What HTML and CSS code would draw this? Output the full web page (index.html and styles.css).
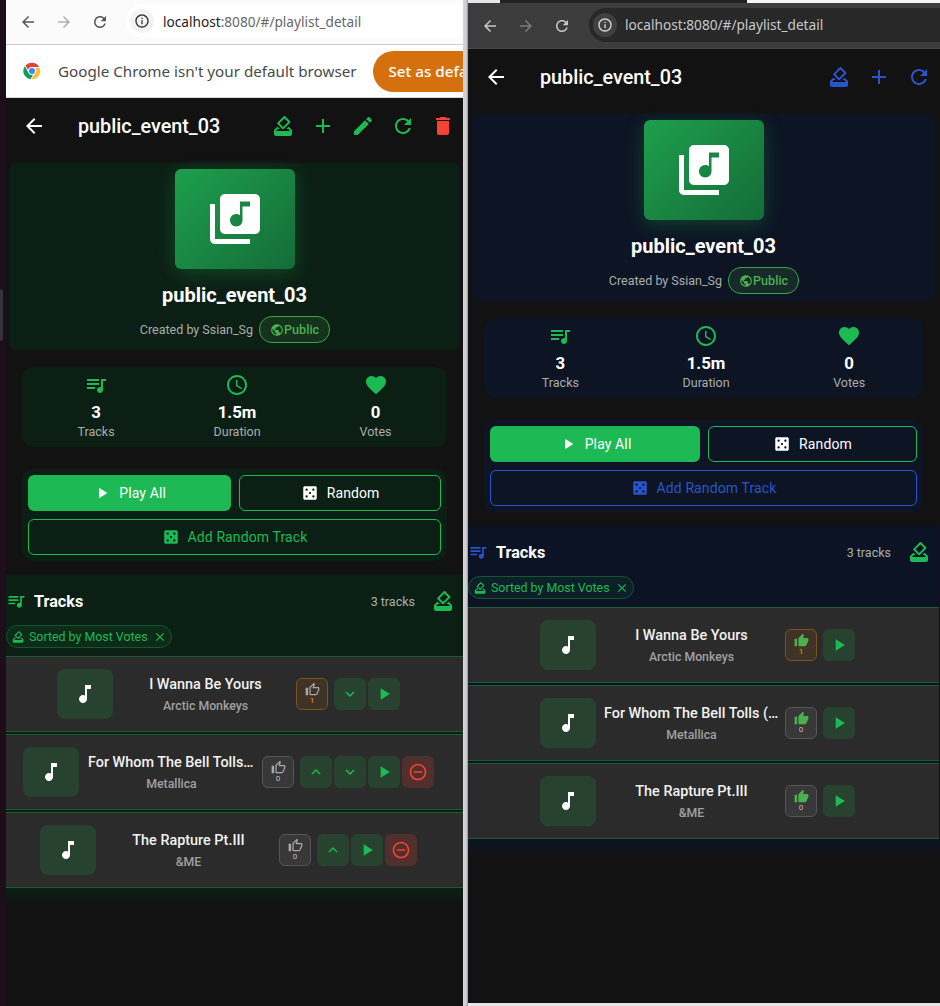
FILE: index.html
```html
<!DOCTYPE html>
<html lang="en">
<head>
<meta charset="utf-8">
<title>playlist_detail</title>
<link rel="stylesheet" href="styles.css">
</head>
<body>
<svg class="sprite" aria-hidden="true">
  <symbol id="i-back" viewBox="0 0 24 24"><path d="M20 11H7.83l5.59-5.59L12 4l-8 8 8 8 1.41-1.41L7.83 13H20v-2z"/></symbol>
  <symbol id="i-forward" viewBox="0 0 24 24"><path d="M4 11h12.17l-5.59-5.59L12 4l8 8-8 8-1.41-1.41L16.17 13H4v-2z"/></symbol>
  <symbol id="i-vote" viewBox="0 0 24 24"><path d="M18 13h-.68l-2 2h1.91L19 17H5l1.78-2h2.05l-2-2H6l-3 3v4c0 1.1.89 2 1.99 2H19c1.1 0 2-.89 2-2v-4l-3-3z"/><path d="M11.34 15.02c.39.39 1.02.39 1.41 0l6.36-6.36c.39-.39.39-1.02 0-1.41L14.16 2.3c-.38-.4-1.01-.4-1.4-.01L6.39 8.66c-.39.39-.39 1.02 0 1.41l4.95 4.95zm2.12-10.61L17 7.95l-4.95 4.95-3.54-3.54 4.95-4.95z" fill-rule="evenodd"/></symbol>
  <symbol id="i-add" viewBox="0 0 24 24"><path d="M19 13h-6v6h-2v-6H5v-2h6V5h2v6h6v2z"/></symbol>
  <symbol id="i-edit" viewBox="0 0 24 24"><path d="M3 17.25V21h3.75L17.81 9.94l-3.75-3.75L3 17.25zM20.71 7.04c.39-.39.39-1.02 0-1.41l-2.34-2.34c-.39-.39-1.02-.39-1.41 0l-1.83 1.83 3.75 3.75 1.83-1.83z"/></symbol>
  <symbol id="i-refresh" viewBox="0 0 24 24"><path d="M17.65 6.35C16.2 4.9 14.21 4 12 4c-4.42 0-7.99 3.58-7.99 8s3.57 8 7.99 8c3.73 0 6.84-2.55 7.73-6h-2.08c-.82 2.33-3.04 4-5.65 4-3.31 0-6-2.69-6-6s2.69-6 6-6c1.66 0 3.14.69 4.22 1.78L13 11h7V4l-2.35 2.35z"/></symbol>
  <symbol id="i-delete" viewBox="0 0 24 24"><path d="M6 19c0 1.1.9 2 2 2h8c1.1 0 2-.9 2-2V7H6v12zM19 4h-3.5l-1-1h-5l-1 1H5v2h14V4z"/></symbol>
  <symbol id="i-library" viewBox="0 0 24 24"><path d="M20 2H8c-1.1 0-2 .9-2 2v12c0 1.1.9 2 2 2h12c1.1 0 2-.9 2-2V4c0-1.1-.9-2-2-2zm-2 5h-3v5.5c0 1.38-1.12 2.5-2.5 2.5S10 13.88 10 12.5s1.12-2.5 2.5-2.5c.57 0 1.08.19 1.5.51V5h4v2zM4 6H2v14c0 1.1.9 2 2 2h14v-2H4V6z"/></symbol>
  <symbol id="i-public" viewBox="0 0 24 24"><path d="M12 2C6.48 2 2 6.48 2 12s4.48 10 10 10 10-4.48 10-10S17.52 2 12 2zm-1 17.93c-3.95-.49-7-3.85-7-7.93 0-.62.08-1.21.21-1.79L9 15v1c0 1.1.9 2 2 2v1.93zm6.9-2.54c-.26-.81-1-1.39-1.9-1.39h-1v-3c0-.55-.45-1-1-1H8v-2h2c.55 0 1-.45 1-1V7h2c1.1 0 2-.9 2-2v-.41c2.93 1.19 5 4.06 5 7.41 0 2.08-.8 3.97-2.1 5.39z"/></symbol>
  <symbol id="i-queue" viewBox="0 0 24 24"><path d="M15 6H3v2h12V6zm0 4H3v2h12v-2zM3 16h8v-2H3v2zM17 6v8.18c-.31-.11-.65-.18-1-.18-1.66 0-3 1.34-3 3s1.34 3 3 3 3-1.34 3-3V8h3V6h-5z"/></symbol>
  <symbol id="i-time" viewBox="0 0 24 24"><path d="M11.99 2C6.47 2 2 6.48 2 12s4.47 10 9.99 10C17.52 22 22 17.52 22 12S17.52 2 11.99 2zM12 20c-4.42 0-8-3.58-8-8s3.58-8 8-8 8 3.58 8 8-3.58 8-8 8zm.5-13H11v6l5.25 3.15.75-1.23-4.5-2.67z"/></symbol>
  <symbol id="i-heart" viewBox="0 0 24 24"><path d="M12 21.35l-1.45-1.32C5.4 15.36 2 12.28 2 8.5 2 5.42 4.42 3 7.5 3c1.74 0 3.41.81 4.5 2.09C13.09 3.81 14.76 3 16.5 3 19.58 3 22 5.42 22 8.5c0 3.78-3.4 6.86-8.55 11.54L12 21.35z"/></symbol>
  <symbol id="i-play" viewBox="0 0 24 24"><path d="M8 5v14l11-7z"/></symbol>
  <symbol id="i-casino" viewBox="0 0 24 24"><path d="M19 3H5c-1.1 0-2 .9-2 2v14c0 1.1.9 2 2 2h14c1.1 0 2-.9 2-2V5c0-1.1-.9-2-2-2zM7.5 18c-.83 0-1.5-.67-1.5-1.5S6.67 15 7.5 15s1.5.67 1.5 1.5S8.33 18 7.5 18zm0-9C6.67 9 6 8.33 6 7.5S6.67 6 7.5 6 9 6.67 9 7.5 8.33 9 7.5 9zm4.5 4.5c-.83 0-1.5-.67-1.5-1.5s.67-1.5 1.5-1.5 1.5.67 1.5 1.5-.67 1.5-1.5 1.5zm4.5 4.5c-.83 0-1.5-.67-1.5-1.5s.67-1.5 1.5-1.5 1.5.67 1.5 1.5-.67 1.5-1.5 1.5zm0-9c-.83 0-1.5-.67-1.5-1.5S15.67 6 16.5 6s1.5.67 1.5 1.5S17.33 9 16.5 9z"/></symbol>
  <symbol id="i-note" viewBox="0 0 24 24"><path d="M12 3v10.55c-.59-.34-1.27-.55-2-.55-2.21 0-4 1.79-4 4s1.79 4 4 4 4-1.79 4-4V7h4V3h-6z"/></symbol>
  <symbol id="i-thumb" viewBox="0 0 24 24"><path d="M1 21h4V9H1v12zm22-11c0-1.1-.9-2-2-2h-6.31l.95-4.57.03-.32c0-.41-.17-.79-.44-1.06L14.17 1 7.59 7.59C7.22 7.95 7 8.45 7 9v10c0 1.1.9 2 2 2h9c.83 0 1.54-.5 1.84-1.22l3.02-7.05c.09-.23.14-.47.14-.73v-2z"/></symbol>
  <symbol id="i-thumb-o" viewBox="0 0 24 24"><path d="M9 21h9c.83 0 1.54-.5 1.84-1.22l3.02-7.05c.09-.23.14-.47.14-.73v-2c0-1.1-.9-2-2-2h-6.31l.95-4.57.03-.32c0-.41-.17-.79-.44-1.06L14.17 1 7.58 7.59C7.22 7.95 7 8.45 7 9v10c0 1.1.9 2 2 2zM9 9l4.34-4.34L12 10h9v2l-3 7H9V9zM1 9h4v12H1z"/></symbol>
  <symbol id="i-up" viewBox="0 0 24 24"><path d="M7.41 15.41L12 10.83l4.59 4.58L18 14l-6-6-6 6z"/></symbol>
  <symbol id="i-down" viewBox="0 0 24 24"><path d="M7.41 8.59L12 13.17l4.59-4.58L18 10l-6 6-6-6z"/></symbol>
  <symbol id="i-remove" viewBox="0 0 24 24"><path d="M7 11v2h10v-2H7zm5-9C6.48 2 2 6.48 2 12s4.48 10 10 10 10-4.48 10-10S17.52 2 12 2zm0 18c-4.41 0-8-3.59-8-8s3.59-8 8-8 8 3.59 8 8-3.59 8-8 8z"/></symbol>
  <symbol id="i-close" viewBox="0 0 24 24"><path d="M19 6.41L17.59 5 12 10.59 6.41 5 5 6.41 10.59 12 5 17.59 6.41 19 12 13.41 17.59 19 19 17.59 13.41 12z"/></symbol>
  <symbol id="i-info" viewBox="0 0 24 24"><path d="M11 7h2v2h-2zm0 4h2v6h-2zm1-9C6.48 2 2 6.48 2 12s4.48 10 10 10 10-4.48 10-10S17.52 2 12 2zm0 18c-4.41 0-8-3.59-8-8s3.59-8 8-8 8 3.59 8 8-3.59 8-8 8z"/></symbol>
</svg>

<div class="desktop">
  <div class="edge"></div>

  <section class="window window-light">
    <div class="toolbar">
      <svg class="nav"><use href="#i-back"/></svg>
      <svg class="nav nav-off"><use href="#i-forward"/></svg>
      <svg class="nav"><use href="#i-refresh"/></svg>
      <div class="omnibox">
        <span class="site-info"><svg class="site-icon"><use href="#i-info"/></svg></span>
        <span class="url"><span class="host">localhost</span><span class="path">:8080/#/playlist_detail</span></span>
      </div>
    </div>
    <div class="infobar">
      <svg class="chrome-logo" viewBox="0 0 24 24">
        <path fill="#db4437" d="M12 1a11 11 0 0 1 9.53 5.5H12a5.5 5.5 0 0 0-5.2 3.7L3.1 4.6A11 11 0 0 1 12 1z"/>
        <path fill="#0f9d58" d="M2.5 5.5l4.7 8.9a5.5 5.5 0 0 0 5.8 3l-3 5.5A11 11 0 0 1 2.5 5.5z"/>
        <path fill="#fbc02d" d="M22 7.5A11 11 0 0 1 11 23l4.8-7.3A5.5 5.5 0 0 0 16 7.5z"/>
        <circle cx="12" cy="12" r="5" fill="#fff"/>
        <circle cx="12" cy="12" r="4" fill="#4285f4"/>
      </svg>
      <span class="info-text">Google Chrome isn't your default browser</span>
      <span class="info-button">Set as default</span>
    </div>
    <div class="app">
      <header class="appbar">
        <svg class="bar-back"><use href="#i-back"/></svg>
        <h1 class="bar-title">public_event_03</h1>
        <div class="bar-actions">
          <span class="bar-action"><svg class="icon"><use href="#i-vote"/></svg></span>
          <span class="bar-action"><svg class="icon"><use href="#i-add"/></svg></span>
          <span class="bar-action"><svg class="icon"><use href="#i-edit"/></svg></span>
          <span class="bar-action"><svg class="icon"><use href="#i-refresh"/></svg></span>
          <span class="bar-action bar-danger"><svg class="icon"><use href="#i-delete"/></svg></span>
        </div>
      </header>
      <div class="hero">
        <div class="cover"><svg class="cover-icon"><use href="#i-library"/></svg></div>
        <h2 class="hero-title">public_event_03</h2>
        <div class="hero-meta">
          <span class="creator">Created by Ssian_Sg</span>
          <span class="badge"><svg class="badge-icon"><use href="#i-public"/></svg>Public</span>
        </div>
      </div>
      <div class="stats">
        <div class="stat"><svg class="icon stat-icon"><use href="#i-queue"/></svg><b class="stat-value">3</b><span class="stat-label">Tracks</span></div>
        <div class="stat"><svg class="icon stat-icon"><use href="#i-time"/></svg><b class="stat-value">1.5m</b><span class="stat-label">Duration</span></div>
        <div class="stat"><svg class="icon stat-icon"><use href="#i-heart"/></svg><b class="stat-value">0</b><span class="stat-label">Votes</span></div>
      </div>
      <div class="actions">
        <div class="action-row">
          <span class="action action-primary"><svg class="action-icon"><use href="#i-play"/></svg>Play All</span>
          <span class="action action-outline"><svg class="action-icon"><use href="#i-casino"/></svg>Random</span>
        </div>
        <span class="action action-accent"><svg class="action-icon"><use href="#i-casino"/></svg>Add Random Track</span>
      </div>
      <div class="tracks">
        <div class="tracks-head">
          <svg class="tracks-icon"><use href="#i-queue"/></svg>
          <h3 class="tracks-title">Tracks</h3>
          <span class="tracks-count">3 tracks</span>
          <span class="tracks-sort"><svg class="icon"><use href="#i-vote"/></svg></span>
        </div>
        <span class="sort-chip"><svg class="chip-icon"><use href="#i-vote"/></svg>Sorted by Most Votes<svg class="chip-close"><use href="#i-close"/></svg></span>
        <ul class="rows">
          <li class="row">
            <span class="art"><svg class="art-icon"><use href="#i-note"/></svg></span>
            <div class="row-text"><div class="row-title">I Wanna Be Yours</div><div class="row-sub">Arctic Monkeys</div></div>
            <span class="vote vote-hot"><svg class="vote-icon"><use href="#i-thumb-o"/></svg><span class="vote-count">1</span></span>
            <span class="row-btns">
              <span class="btn"><svg class="btn-arrow"><use href="#i-down"/></svg></span>
              <span class="btn"><svg class="btn-play"><use href="#i-play"/></svg></span>
            </span>
          </li>
          <li class="row">
            <span class="art"><svg class="art-icon"><use href="#i-note"/></svg></span>
            <div class="row-text"><div class="row-title">For Whom The Bell Tolls (Remastered)</div><div class="row-sub">Metallica</div></div>
            <span class="vote"><svg class="vote-icon"><use href="#i-thumb-o"/></svg><span class="vote-count">0</span></span>
            <span class="row-btns">
              <span class="btn"><svg class="btn-arrow"><use href="#i-up"/></svg></span>
              <span class="btn"><svg class="btn-arrow"><use href="#i-down"/></svg></span>
              <span class="btn"><svg class="btn-play"><use href="#i-play"/></svg></span>
              <span class="btn btn-danger"><svg class="btn-remove"><use href="#i-remove"/></svg></span>
            </span>
          </li>
          <li class="row">
            <span class="art"><svg class="art-icon"><use href="#i-note"/></svg></span>
            <div class="row-text"><div class="row-title">The Rapture Pt.III</div><div class="row-sub">&amp;ME</div></div>
            <span class="vote"><svg class="vote-icon"><use href="#i-thumb-o"/></svg><span class="vote-count">0</span></span>
            <span class="row-btns">
              <span class="btn"><svg class="btn-arrow"><use href="#i-up"/></svg></span>
              <span class="btn"><svg class="btn-play"><use href="#i-play"/></svg></span>
              <span class="btn btn-danger"><svg class="btn-remove"><use href="#i-remove"/></svg></span>
            </span>
          </li>
        </ul>
      </div>
    </div>
  </section>

  <div class="divider"></div>

  <section class="window window-dark">
    <div class="toolbar">
      <svg class="nav"><use href="#i-back"/></svg>
      <svg class="nav nav-off"><use href="#i-forward"/></svg>
      <svg class="nav"><use href="#i-refresh"/></svg>
      <div class="omnibox">
        <span class="site-info"><svg class="site-icon"><use href="#i-info"/></svg></span>
        <span class="url"><span class="host">localhost</span><span class="path">:8080/#/playlist_detail</span></span>
      </div>
    </div>
    <div class="app">
      <header class="appbar">
        <svg class="bar-back"><use href="#i-back"/></svg>
        <h1 class="bar-title">public_event_03</h1>
        <div class="bar-actions">
          <span class="bar-action"><svg class="icon"><use href="#i-vote"/></svg></span>
          <span class="bar-action"><svg class="icon"><use href="#i-add"/></svg></span>
          <span class="bar-action"><svg class="icon"><use href="#i-refresh"/></svg></span>
        </div>
      </header>
      <div class="hero">
        <div class="cover"><svg class="cover-icon"><use href="#i-library"/></svg></div>
        <h2 class="hero-title">public_event_03</h2>
        <div class="hero-meta">
          <span class="creator">Created by Ssian_Sg</span>
          <span class="badge"><svg class="badge-icon"><use href="#i-public"/></svg>Public</span>
        </div>
      </div>
      <div class="stats">
        <div class="stat"><svg class="icon stat-icon"><use href="#i-queue"/></svg><b class="stat-value">3</b><span class="stat-label">Tracks</span></div>
        <div class="stat"><svg class="icon stat-icon"><use href="#i-time"/></svg><b class="stat-value">1.5m</b><span class="stat-label">Duration</span></div>
        <div class="stat"><svg class="icon stat-icon"><use href="#i-heart"/></svg><b class="stat-value">0</b><span class="stat-label">Votes</span></div>
      </div>
      <div class="actions">
        <div class="action-row">
          <span class="action action-primary"><svg class="action-icon"><use href="#i-play"/></svg>Play All</span>
          <span class="action action-outline"><svg class="action-icon"><use href="#i-casino"/></svg>Random</span>
        </div>
        <span class="action action-accent"><svg class="action-icon"><use href="#i-casino"/></svg>Add Random Track</span>
      </div>
      <div class="tracks">
        <div class="tracks-head">
          <svg class="tracks-icon"><use href="#i-queue"/></svg>
          <h3 class="tracks-title">Tracks</h3>
          <span class="tracks-count">3 tracks</span>
          <span class="tracks-sort"><svg class="icon"><use href="#i-vote"/></svg></span>
        </div>
        <span class="sort-chip"><svg class="chip-icon"><use href="#i-vote"/></svg>Sorted by Most Votes<svg class="chip-close"><use href="#i-close"/></svg></span>
        <ul class="rows">
          <li class="row">
            <span class="art"><svg class="art-icon"><use href="#i-note"/></svg></span>
            <div class="row-text"><div class="row-title">I Wanna Be Yours</div><div class="row-sub">Arctic Monkeys</div></div>
            <span class="vote vote-hot vote-on"><svg class="vote-icon"><use href="#i-thumb"/></svg><span class="vote-count">1</span></span>
            <span class="row-btns"><span class="btn"><svg class="btn-play"><use href="#i-play"/></svg></span></span>
          </li>
          <li class="row">
            <span class="art"><svg class="art-icon"><use href="#i-note"/></svg></span>
            <div class="row-text"><div class="row-title">For Whom The Bell Tolls (Remastered)</div><div class="row-sub">Metallica</div></div>
            <span class="vote vote-on"><svg class="vote-icon"><use href="#i-thumb"/></svg><span class="vote-count">0</span></span>
            <span class="row-btns"><span class="btn"><svg class="btn-play"><use href="#i-play"/></svg></span></span>
          </li>
          <li class="row">
            <span class="art"><svg class="art-icon"><use href="#i-note"/></svg></span>
            <div class="row-text"><div class="row-title">The Rapture Pt.III</div><div class="row-sub">&amp;ME</div></div>
            <span class="vote vote-on"><svg class="vote-icon"><use href="#i-thumb"/></svg><span class="vote-count">0</span></span>
            <span class="row-btns"><span class="btn"><svg class="btn-play"><use href="#i-play"/></svg></span></span>
          </li>
        </ul>
      </div>
    </div>
  </section>
</div>
</body>
</html>
```

FILE: styles.css
```css
* { box-sizing: border-box; }
html, body { margin: 0; padding: 0; }
body { width: 940px; height: 1006px; overflow: hidden; font-family: Roboto, "Liberation Sans", sans-serif; background: #e6e6e9; }
h1, h2, h3, ul { margin: 0; padding: 0; }
ul { list-style: none; }
svg { display: block; flex: none; fill: currentColor; }
.sprite { width: 0; height: 0; position: absolute; }

.desktop { display: flex; width: 940px; height: 1006px; background: linear-gradient(to right, #e6e6e9 500px, #222 500px, #222 747px, #f4f4f4 747px) top / 100% 3px no-repeat; }
.edge { width: 6px; background: #1c0f19; }
.edge::before { content: ""; display: block; width: 3px; height: 52px; margin-top: 289px; border-radius: 0 3px 3px 0; background: #3a323a; }
.divider { width: 5px; background: linear-gradient(to right, #d6d6db, #c9c9ce 70%, #8a8a8e); }

.window { display: flex; flex-direction: column; overflow: hidden; background: #121212; }
.window-light { width: 457px; --accent: #1db954; --card: #0c1f14; --section: #0b1f14; --row-w: 183px; --hero-l: 3px; --hero-r: 3px; }
.window-dark { width: 472px; margin: 3px 0; --accent: #2a54cc; --card: #0d1424; --section: #0c1324; --row-w: 189px; --hero-l: 4px; --hero-r: 4px; }

/* browser chrome */
.toolbar { display: flex; align-items: center; font-family: "Noto Sans", sans-serif; }
.window-light .toolbar { height: 45px; padding-left: 13px; color: #555; background: #fbfbfb; border-bottom: 1px solid #cfcfcf; }
.window-dark .toolbar { height: 46px; padding-left: 13px; color: #c6c8c9; background: #3c3c3c; border-bottom: 1px solid #4a4a4a; }
.nav { width: 18px; height: 18px; margin-right: 18px; }
.nav-off { opacity: .45; }
.omnibox { display: flex; align-items: center; height: 34px; flex: 1; margin-left: -1px; padding-left: 4px; border-radius: 17px 0 0 17px; }
.window-light .omnibox { background: #fff; margin-top: -2px; }
.window-dark .omnibox { background: #282828; margin-top: -2px; margin-left: 0; }
.site-info { width: 24px; height: 24px; border-radius: 50%; display: flex; align-items: center; justify-content: center; margin-right: 8px; }
.window-light .site-info { background: #f3f3f3; color: #333; }
.window-dark .site-info { background: #404040; color: #d8d8d8; }
.site-icon { width: 16px; height: 16px; }
.url { font-size: 13.65px; white-space: nowrap; }
.window-light .url { margin-left: 1px; }
.window-light .host { color: #222; }
.window-light .path { color: #666; }
.window-dark .host { color: #c5c8cc; }
.window-dark .path { color: #c5c8cc; }

.infobar { height: 53px; display: flex; align-items: center; background: #fff; border-bottom: 1px solid #d8d8d8; font-family: "Noto Sans", sans-serif; overflow: hidden; white-space: nowrap; }
.chrome-logo { width: 18px; height: 18px; margin-left: 17px; }
.info-text { margin-left: 17px; font-size: 15.2px; color: #4a4a4a; }
.info-button { flex: none; margin-left: 16px; padding: 0 16px; height: 41px; line-height: 40px; border-radius: 21px; background: #d4700e; color: #fff; font-size: 15.2px; font-weight: 500; }

/* app */
.app { flex: 1; background: #121212; color: #fff; }
.window-dark .app { padding-right: 1px; }
.appbar { display: flex; align-items: center; height: 56px; }
.bar-back { width: 24px; height: 24px; margin-left: 16px; }
.bar-title { margin: 2px 0 0 32px; font-size: 19.8px; font-weight: 500; flex: 1; line-height: 24px; }
.bar-actions { display: flex; color: var(--accent); }
.bar-action { width: 40px; height: 40px; display: flex; align-items: center; justify-content: center; }
.bar-danger { color: #f44336; }
.icon { width: 24px; height: 24px; }

.hero { display: flex; flex-direction: column; align-items: center; height: 187px; margin: 9px var(--hero-r) 0 var(--hero-l); padding-top: 6px; background: var(--card); border-radius: 8px; }
.cover { display: flex; align-items: center; justify-content: center; width: 120px; height: 100px; border-radius: 6px; background: linear-gradient(135deg, #1d9f4c, #156c38); box-shadow: 0 4px 20px rgba(29, 185, 84, .28); }
.cover-icon { width: 60px; height: 60px; color: #fff; }
.hero-title { margin-top: 13px; font-size: 20px; font-weight: 700; line-height: 26px; }
.hero-meta { display: flex; align-items: center; gap: 6px; margin-top: 8px; margin-left: 1px; }
.creator { font-size: 12.5px; color: #a9aeab; }
.badge { display: flex; align-items: center; height: 27px; padding: 0 10px; border: 1px solid #3ba54a; border-radius: 13px; background: rgba(76, 175, 80, .14); color: #4caf50; font-size: 12.6px; font-weight: 500; }
.badge-icon { width: 14px; height: 14px; }

.stats { display: flex; justify-content: space-around; height: 80px; margin: 17px 16px 0; padding: 6px; background: var(--card); border-radius: 12px; }
.stat { display: flex; flex-direction: column; align-items: center; }
.stat-icon { color: #1db954; }
.stat-value { margin-top: 4px; font-size: 16.8px; font-weight: 700; line-height: 22px; }
.stat-label { margin-top: 1px; font-size: 12.5px; line-height: 16px; color: #a9aeab; }

.actions { display: flex; flex-direction: column; gap: 8px; height: 92px; margin: 22px 16px 0; padding: 6px; background: var(--card); border-radius: 12px; }
.action-row { display: flex; gap: 8px; }
.action { display: flex; align-items: center; justify-content: center; height: 36px; flex: 1; gap: 8px; border-radius: 6px; font-size: 14px; font-weight: 400; letter-spacing: .12px; }
.action-icon { width: 18px; height: 18px; }
.action-primary { flex: 0 0 49.2%; background: #1db954; color: #fff; }
.action-outline { border: 1px solid #1db954; color: #fff; }
.action-accent { flex: none; border: 1px solid var(--accent); color: var(--accent); }

.tracks { margin-top: 14px; padding-bottom: 16px; background: linear-gradient(to bottom, var(--section) calc(100% - 14px), #121212); }
.tracks-head { display: flex; align-items: center; height: 50px; padding-top: 2px; }
.tracks-icon { width: 20px; height: 20px; color: var(--accent); }
.window-light .tracks-icon { color: #1db954; }
.tracks-title { margin-left: 8px; flex: 1; font-size: 16.2px; font-weight: 700; }
.tracks-count { margin-right: 8px; font-size: 12.5px; color: #a9aeab; }
.tracks-sort { width: 40px; display: flex; justify-content: center; color: #1db954; }

.sort-chip { display: inline-flex; align-items: center; height: 23px; padding: 0 4px; border: 1px solid #14562f; border-radius: 12px; background: rgba(29, 185, 84, .08); color: #1db954; font-size: 12.4px; white-space: nowrap; vertical-align: top; }
.chip-icon { width: 14px; height: 14px; margin-right: 4px; }
.chip-close { width: 14px; height: 14px; margin-left: 5px; }

.rows { display: flex; flex-direction: column; gap: 2px; margin-top: 8px; }
.row { display: flex; align-items: center; justify-content: center; height: 76px; padding-right: 12px; background: #2b2b2b; border-top: 1px solid #1d5a32; border-bottom: 1px solid #1d5a32; }
.art { display: flex; align-items: center; justify-content: center; width: 56px; height: 50px; border-radius: 8px; background: #27432f; color: #fff; }
.art-icon { width: 24px; height: 24px; }
.row-text { width: var(--row-w); padding: 2px 7px 0 9px; text-align: center; }
.window-dark .row-text { padding: 2px 6px 0 8px; }
.row-title { font-size: 14.4px; font-weight: 500; line-height: 22px; color: #f2f2f2; white-space: nowrap; overflow: hidden; text-overflow: ellipsis; }
.row-sub { font-size: 12.3px; line-height: 20px; color: #a0a0a0; font-weight: 500; }

.vote { display: flex; flex-direction: column; align-items: center; width: 32px; height: 32px; padding-top: 3px; border: 1px solid #565656; border-radius: 6px; background: #383838; color: #a8a8a8; }
.vote-hot { border-color: #7c5320; background: #3f3226; }
.vote-on .vote-icon { color: #4caf50; }
.vote-icon { width: 15px; height: 15px; }
.vote-count { font-size: 8px; line-height: 8px; color: #bdbdbd; }
.vote-hot .vote-count { color: #ff9800; }
.row-btns { display: flex; gap: 2px; margin-left: 6px; }
.btn { display: flex; align-items: center; justify-content: center; width: 32px; height: 32px; border-radius: 6px; background: #27432f; color: #1db954; }
.btn-danger { background: #512f2c; color: #f44336; }
.btn-arrow { width: 18px; height: 18px; }
.btn-play { width: 20px; height: 20px; }
.btn-remove { width: 20px; height: 20px; }
```
